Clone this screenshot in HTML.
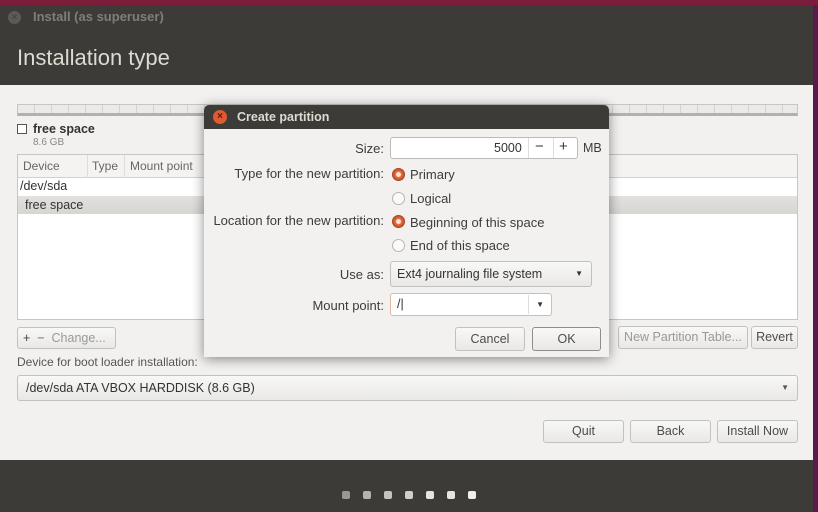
<!DOCTYPE html>
<html><head><meta charset="utf-8"><style>
*{box-sizing:border-box;margin:0;padding:0}
body{width:818px;height:512px;overflow:hidden;background:#5a1f48;font-family:"Liberation Sans",sans-serif;font-size:12px;color:#3c3c3c;position:relative}
.a{position:absolute}
.btn{position:absolute;border:1px solid #c3c1bd;border-radius:3px;background:linear-gradient(#f8f8f7,#e9e8e6);text-align:center;color:#4c4c4c;font-size:12.5px}
.radio{position:absolute;width:13px;height:13px;border-radius:50%;border:1px solid #b8b6b2;background:#fafafa}
.radio.on{background:radial-gradient(circle,#fbe5d8 0 2px,#e06a3a 3px,#c9502a 6px);border-color:#a8441f}
.l{font-size:13px}
</style></head><body>
<div class="a" style="left:0;top:0;width:818px;height:6px;background:#7a1c3a"></div>
<div class="a" style="left:0;top:5px;width:813px;height:80px;background:#3c3b37"></div>
<div class="a" style="left:8px;top:11px;width:13px;height:13px;border-radius:50%;background:#5b5a56;color:#3c3b37;font-size:10px;line-height:13px;text-align:center">×</div>
<div class="a" style="left:33px;top:9px;color:#7f7e79;font-size:13px;font-weight:bold">Install (as superuser)</div>
<div class="a" style="left:17px;top:45px;color:#dfdbd2;font-size:22px">Installation type</div>
<div class="a" style="left:0;top:85px;width:813px;height:375px;background:#f2f1f0"></div>
<div class="a" style="left:0;top:460px;width:813px;height:52px;background:#3c3b37"></div>
<div class="a" style="left:342px;top:491px;display:flex;gap:13px">
<span style="width:8px;height:8px;background:#9a9893;border-radius:2px"></span><span style="width:8px;height:8px;background:#b5b3ae;border-radius:2px"></span><span style="width:8px;height:8px;background:#c5c3be;border-radius:2px"></span><span style="width:8px;height:8px;background:#d0cec9;border-radius:2px"></span><span style="width:8px;height:8px;background:#e6e4e0;border-radius:2px"></span><span style="width:8px;height:8px;background:#e6e4e0;border-radius:2px"></span><span style="width:8px;height:8px;background:#f0efec;border-radius:2px"></span></div>
<div class="a" style="left:17px;top:104px;width:781px;height:12px;border:1px solid #c8c6c2;background:repeating-linear-gradient(90deg,#ebeae8 0 16px,#d5d3cf 16px 17px);border-bottom:3px solid #b3b1ad"></div>
<div class="a" style="left:17px;top:124px;width:10px;height:10px;border:1px solid #555;background:#fff"></div>
<div class="a" style="left:33px;top:122px;font-weight:bold;font-size:12.5px;color:#333">free space</div>
<div class="a" style="left:33px;top:137px;font-size:10px;color:#888">8.6 GB</div>
<div class="a" style="left:17px;top:154px;width:781px;height:166px;border:1px solid #c8c6c2;background:#fff"></div>
<div class="a" style="left:18px;top:155px;width:779px;height:23px;background:#f4f3f2;border-bottom:1px solid #d4d2ce"></div>
<div class="a" style="left:23px;top:159px;color:#666">Device</div>
<div class="a" style="left:87px;top:155px;width:1px;height:23px;background:#ddd"></div>
<div class="a" style="left:92px;top:159px;color:#666">Type</div>
<div class="a" style="left:124px;top:155px;width:1px;height:23px;background:#ddd"></div>
<div class="a" style="left:130px;top:159px;color:#666">Mount point</div>
<div class="a" style="left:20px;top:179px;font-size:12.5px;color:#333">/dev/sda</div>
<div class="a" style="left:18px;top:196px;width:779px;height:18px;background:linear-gradient(#e2e1df,#d6d5d2)"></div>
<div class="a" style="left:25px;top:198px;font-size:12.5px;color:#333">free space</div>
<div class="btn" style="left:17px;top:327px;width:99px;height:22px;line-height:20px;text-align:left;padding-left:5px;color:#999"><span style="color:#444">+</span> &nbsp;<span style="color:#666">−</span>&nbsp; Change...</div>
<div class="btn" style="left:618px;top:326px;width:130px;height:23px;line-height:21px;color:#999">New Partition Table...</div>
<div class="btn" style="left:751px;top:326px;width:47px;height:23px;line-height:21px">Revert</div>
<div class="a" style="left:17px;top:355px;color:#555">Device for boot loader installation:</div>
<div class="btn" style="left:17px;top:375px;width:781px;height:26px;line-height:24px;text-align:left;padding-left:8px;color:#333">/dev/sda ATA VBOX HARDDISK (8.6 GB)<span style="position:absolute;right:8px;font-size:8px;color:#555">▼</span></div>
<div class="btn" style="left:543px;top:420px;width:81px;height:23px;line-height:21px">Quit</div>
<div class="btn" style="left:630px;top:420px;width:81px;height:23px;line-height:21px">Back</div>
<div class="btn" style="left:717px;top:420px;width:81px;height:23px;line-height:21px">Install Now</div>
<div class="a" style="left:204px;top:105px;width:405px;height:252px;background:#f2f1f0;border-radius:5px 5px 0 0;box-shadow:0 2px 12px rgba(0,0,0,.45);overflow:hidden">
<div style="height:24px;background:#3c3b37"></div></div>
<div class="a" style="left:213px;top:110px;width:14px;height:14px;border-radius:50%;background:#e05a30;color:#5a1a08;font-size:10px;line-height:14px;text-align:center;font-weight:bold">×</div>
<div class="a" style="left:237px;top:110px;color:#dfdbd2;font-weight:bold;font-size:12.5px">Create partition</div>
<div class="a l" style="right:434px;top:141px">Size:</div>
<div class="a" style="left:390px;top:137px;width:188px;height:22px;border:1px solid #bdbbb7;border-radius:3px;background:#fff"></div>
<div class="a" style="left:494px;top:141px;font-size:12.5px;color:#333">5000</div>
<div class="a" style="left:528px;top:138px;width:1px;height:20px;background:#ddd"></div>
<div class="a" style="left:535px;top:138px;font-size:15px">−</div>
<div class="a" style="left:553px;top:138px;width:1px;height:20px;background:#ddd"></div>
<div class="a" style="left:559px;top:138px;font-size:15px">+</div>
<div class="a" style="left:583px;top:141px;font-size:12.5px">MB</div>
<div class="a l" style="right:434px;top:166px">Type for the new partition:</div>
<div class="radio on" style="left:392px;top:168px"></div><div class="a l" style="left:410px;top:167px">Primary</div>
<div class="radio" style="left:392px;top:192px"></div><div class="a l" style="left:410px;top:191px">Logical</div>
<div class="a l" style="right:434px;top:213px">Location for the new partition:</div>
<div class="radio on" style="left:392px;top:215px"></div><div class="a l" style="left:410px;top:215px">Beginning of this space</div>
<div class="radio" style="left:392px;top:239px"></div><div class="a l" style="left:410px;top:238px">End of this space</div>
<div class="a l" style="right:434px;top:267px">Use as:</div>
<div class="btn" style="left:390px;top:261px;width:202px;height:26px;line-height:24px;text-align:left;padding-left:6px;color:#333">Ext4 journaling file system<span style="position:absolute;right:8px;font-size:8px">▼</span></div>
<div class="a l" style="right:434px;top:298px">Mount point:</div>
<div class="a" style="left:390px;top:293px;width:162px;height:23px;border:1px solid #e0b8a0;border-radius:3px;background:#fff;padding-left:6px;line-height:21px;font-size:12.5px;color:#333">/|<span style="position:absolute;left:137px;top:1px;width:1px;height:19px;background:#ddd"></span><span style="position:absolute;right:7px;font-size:8px">▼</span></div>
<div class="btn" style="left:455px;top:327px;width:70px;height:24px;line-height:22px">Cancel</div>
<div class="btn" style="left:532px;top:327px;width:69px;height:24px;line-height:22px;border-color:#8f8d89">OK</div>
<div class="a" style="left:813px;top:5px;width:5px;height:507px;background:#5c1a4c"></div>
</body></html>
